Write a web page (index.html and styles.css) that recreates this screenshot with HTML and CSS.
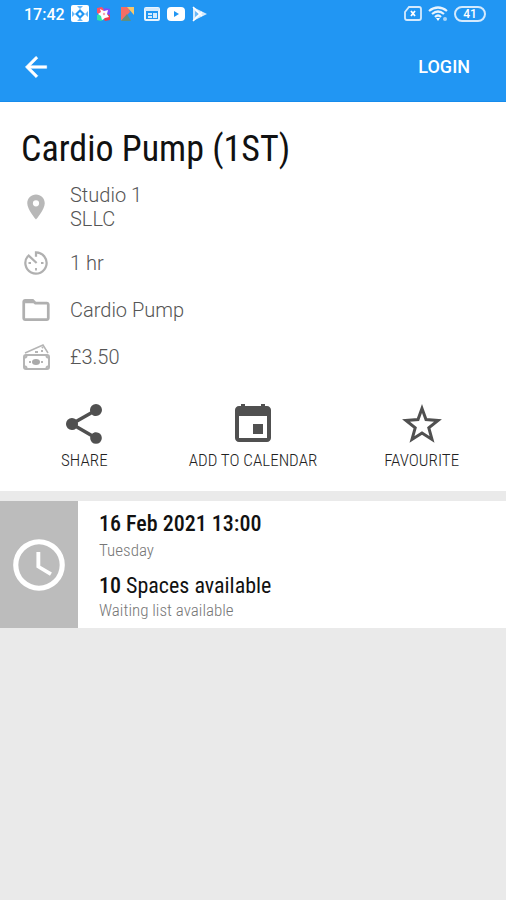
FILE: index.html
```html
<!DOCTYPE html>
<html lang="en">
<head>
    <meta charset="UTF-8">
    <meta name="viewport" content="width=device-width, initial-scale=1.0">
    <title>Cardio Pump (1ST)</title>
    <link rel="stylesheet" href="styles.css">
</head>
<body>
<header class="top">
    <div class="status">
        <span class="time">17:42</span>
        <svg width="18" height="18" viewBox="0 0 18 18"><rect x="0" y="0" width="18" height="17" rx="2" fill="#fff"/><path d="M6 1h6L9 4zM1 6v6l3-3zM17 6v6l-3-3zM6 16h6l-3-3z" fill="#6bb8f8"/><path d="M9 4l5 5-5 5-5-5z" fill="#2196f3"/><path d="M9 7l2 2-2 2-2-2z" fill="#fff"/></svg>
        <svg width="18" height="18" viewBox="0 0 18 18"><path d="M2 3l5-1 3 4-4 4-4-2z" fill="#ff5263"/><path d="M10 3l5 1v5l-4 1-3-4z" fill="#7c4dff"/><path d="M2 10l5-1 3 5-4 2-4-1z" fill="#2ee6a6"/><path d="M11 9l4 1v5l-5 1-2-4z" fill="#f0384f"/><path d="M5 4l4 2 4-1-1 4 2 3-4 1-3 2-1-4-3-2 3-2z" fill="#fff"/><circle cx="9" cy="9" r="1.200" fill="#f6a5b0"/></svg>
        <svg width="18" height="18" viewBox="0 0 18 18"><path d="M2 2h7l2 5-9 9z" fill="#f46d65"/><path d="M8 2h7v8z" fill="#f7c76b"/><path d="M2 16l6-7 4 7z" fill="#5f8f80"/></svg>
        <svg width="18" height="18" viewBox="0 0 18 18"><rect x="2" y="3" width="14" height="12" rx="1" fill="none" stroke="#e8f4fe" stroke-width="2"/><path d="M2 3h14v3H2zM5 8h4v2H5zM5 11h4v2H5zM10 8h4v5h-4z" fill="#d4eafd"/></svg>
        <svg width="18" height="18" viewBox="0 0 18 18"><rect x="0" y="2" width="18" height="14" rx="4" fill="#fff"/><path d="M7 6l5 3-5 3z" fill="#2196f3"/></svg>
        <svg width="18" height="18" viewBox="0 0 18 18"><path d="M2 2l14 7-14 7z" fill="#d4eafd"/><path d="M4 6l4 3-4 3z" fill="#6bb8f8"/><path d="M2 2l9 9M2 16l9-9" stroke="#fff" stroke-width="1.500"/></svg>
        <span class="space"></span>
        <svg width="18" height="18" viewBox="0 0 18 18"><path d="M5 2h10q2 0 2 2v9q0 2-2 2H3q-2 0-2-2V7z" fill="none" stroke="#d4eafd" stroke-width="1.800"/><path d="M7 6l4 5M11 6l-4 5" stroke="#fff" stroke-width="1.800"/></svg>
        <svg width="20" height="18" viewBox="0 0 20 18"><path d="M1 6q9-7 18 0M4 9q6-5 12 0M7 12q3-3 6 0" fill="none" stroke="#e8f4fe" stroke-width="2.200"/><path d="M8 13h4l-2 3z" fill="#fff"/><circle cx="17" cy="14" r="2" fill="#a6d5fa"/></svg>
        <span class="battery">41</span>
    </div>
    <div class="bar">
        <button class="back" aria-label="Back"><svg width="32" height="32" viewBox="0 0 24 24"><path d="M20 11H7.830l5.590-5.590L12 4l-8 8 8 8 1.410-1.410L7.830 13H20z" fill="#fff" stroke="#fff" stroke-width=".4"/></svg></button>
        <button class="login">LOGIN</button>
    </div>
</header>
<main>
    <section class="details">
        <h1>Cardio Pump (1ST)</h1>
        <ul class="facts">
            <li>
                <svg width="30" height="30" viewBox="0 0 24 24"><path d="M12 2C8.130 2 5 5.130 5 9c0 5.250 7 13 7 13s7-7.750 7-13c0-3.870-3.130-7-7-7zm0 9.500a2.500 2.500 0 1 1 0-5 2.500 2.500 0 0 1 0 5z" fill="#b8b8b8"/></svg>
                <span>Studio 1<br>SLLC</span>
            </li>
            <li>
                <svg width="30" height="30" viewBox="0 0 24 24"><path d="M12 7V3.500a8.500 8.500 0 1 1-6.500 3M5.500 5.500l7 6.500" fill="none" stroke="#b0b0b0" stroke-width="1.800"/><path d="M6 12h2M16 12h2M12 16v2" stroke="#b0b0b0" stroke-width="1.500"/></svg>
                <span>1 hr</span>
            </li>
            <li>
                <svg width="30" height="30" viewBox="1 1 22 22"><path d="M9.170 6l2 2H20v10H4V6h5.170M10 4H4c-1.100 0-2 .9-2 2v12c0 1.100.9 2 2 2h16c1.100 0 2-.9 2-2V8c0-1.100-.9-2-2-2h-8z" fill="#b0b0b0"/><path d="M4 5h5l2 2H4z" fill="#b0b0b0"/></svg>
                <span>Cardio Pump</span>
            </li>
            <li>
                <svg width="30" height="30" viewBox="0 0 30 30"><rect x="3" y="13" width="25" height="14" rx="2" fill="none" stroke="#b5b5b5" stroke-width="2"/><path d="M4 11L22 3l5 8" fill="none" stroke="#b5b5b5" stroke-width="1.500"/><ellipse cx="15" cy="20" rx="4" ry="3" fill="#aaa"/><path d="M8 20h2M20 20h2M4 16l2-2M27 16l-2-2M4 24l2 2M27 24l-2 2M14 10h3M20 9h2M21 6l1-1" stroke="#b5b5b5" stroke-width="2"/></svg>
                <span>£3.50</span>
            </li>
        </ul>
    </section>
    <section class="actions">
        <button><svg width="48" height="48" viewBox="0 0 24 24"><path d="M18 16.080c-.76 0-1.440.3-1.960.77L8.910 12.700c.05-.23.09-.46.09-.7s-.04-.47-.09-.7l7.050-4.110c.54.5 1.250.81 2.040.81a3 3 0 1 0-3-3c0 .24.04.47.09.7L8.040 9.810a3 3 0 1 0 0 4.380l7.120 4.160c-.05.21-.08.43-.08.65a2.920 2.920 0 1 0 2.920-2.920z"/></svg>SHARE</button>
        <button><svg width="48" height="48" viewBox="0 0 24 24"><path d="M17 12h-5v5h5zM16 2v1H8V2H6v1H5c-1.110 0-2 .9-2 2v14c0 1.100.89 2 2 2h14c1.100 0 2-.9 2-2V5c0-1.100-.9-2-2-2h-1V2zm3 17H5V8h14z"/></svg>ADD TO CALENDAR</button>
        <button><svg width="48" height="48" viewBox="0 0 24 24"><path d="M12 4.200l2 5.600 6 .4-4.600 3.700 1.600 5.800-5-3.200-5 3.200 1.600-5.800L4 10.200l6-.4z" fill="none" stroke="#505050" stroke-width="1.500"/></svg>FAVOURITE</button>
    </section>
    <section class="slot">
        <div class="clock"><svg width="62" height="62" viewBox="0 0 24 24"><path d="M12 2a10 10 0 1 0 0 20 10 10 0 0 0 0-20zm0 18a8 8 0 1 1 0-16 8 8 0 0 1 0 16zm.5-13H11v6l5.250 3.150.75-1.230-4.500-2.670z" fill="#fff"/></svg></div>
        <div class="when">
            <h2>16 Feb 2021 13:00</h2>
            <p>Tuesday</p>
            <h3><b>10</b> Spaces available</h3>
            <p>Waiting list available</p>
        </div>
    </section>
</main>
</body>
</html>
```
FILE: styles.css
```css
* {
    box-sizing: border-box;
}
body {
    margin: 0;
    background-color: #eaeaea;
    color: #111;
    font-family: Roboto, sans-serif;
}
h1, h2, h3, p, ul {
    margin: 0;
    padding: 0;
}
svg {
    display: block;
    flex: none;
}
button {
    border: none;
    padding: 0;
    background: none;
    font-family: inherit;
    cursor: pointer;
}
.top {
    background-color: #2196f3;
    border-bottom: 1px solid #168cec;
    color: #fff;
}
.status {
    display: flex;
    align-items: center;
    gap: 6px;
    height: 28px;
    padding: 0 20px 0 24px;
}
.time {
    font-size: 16px;
    font-weight: 500;
}
.space {
    flex: 1;
}
.battery {
    width: 32px;
    border: 2px solid #d4eafd;
    border-radius: 8px;
    font-size: 12px;
    line-height: 12px;
    font-weight: 500;
    text-align: center;
}
.bar {
    display: flex;
    align-items: center;
    justify-content: space-between;
    height: 73px;
    padding: 4px 36px 0 20px;
}
.login {
    color: #fff;
    font-size: 18px;
    font-weight: 500;
}
.details {
    background-color: #fff;
    padding: 24px 21px 0;
}
h1 {
    font-family: "Roboto Condensed", Roboto, sans-serif;
    font-size: 36px;
    line-height: 46px;
    font-weight: 400;
}
.facts {
    list-style: none;
    display: grid;
    gap: 17px;
    padding-top: 11px;
}
.facts li {
    display: flex;
    align-items: center;
    gap: 19px;
    color: #555;
    font-size: 20px;
    line-height: 24px;
    font-weight: 300;
}
.actions {
    display: grid;
    grid-template-columns: 1fr 1fr 1fr;
    padding: 28px 0 19px;
    background-color: #fff;
}
.actions button {
    display: flex;
    flex-direction: column;
    align-items: center;
    color: #222;
    font-family: "Roboto Condensed", Roboto, sans-serif;
    font-size: 17px;
    line-height: 24px;
    font-weight: 300;
}
.actions svg {
    fill: #505050;
}
.slot {
    display: flex;
    margin-top: 10px;
    background-color: #fff;
    font-family: "Roboto Condensed", Roboto, sans-serif;
}
.clock {
    display: flex;
    align-items: center;
    justify-content: center;
    width: 78px;
    background-color: #bcbcbc;
}
.when {
    padding: 9px 21px 8px;
}
.when h2, .when h3 {
    font-size: 22px;
    line-height: 28px;
    font-weight: 500;
}
.when h3 {
    padding-top: 10px;
    font-weight: 400;
}
.when b {
    font-weight: 500;
}
.when p {
    color: #777;
    font-size: 17px;
    line-height: 24px;
    font-weight: 300;
}
.when h3 + p {
    line-height: 20px;
}
```
